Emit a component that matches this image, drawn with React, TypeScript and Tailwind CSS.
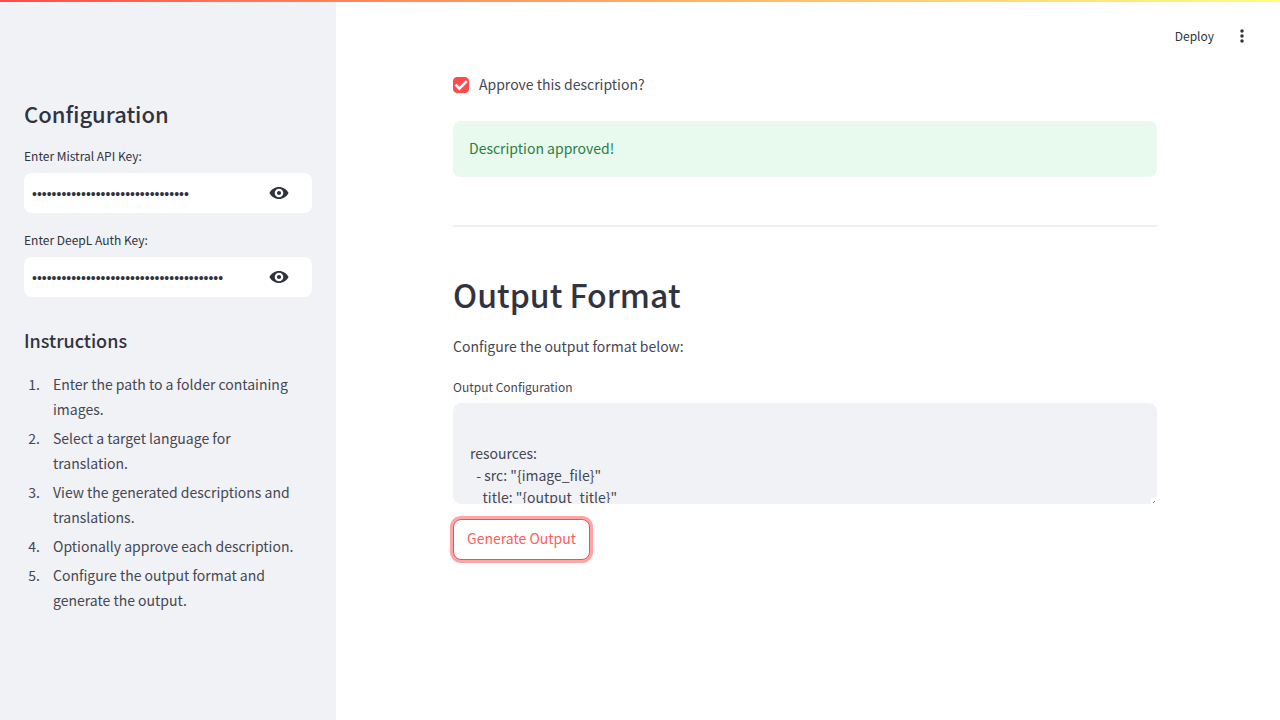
import { useState } from "react";

const OUTPUT_TEMPLATE = `
resources:
  - src: "{image_file}"
    title: "{output_title}"
    params:
      description: "{output_description}"
`;

const STEPS = [
  "Enter the path to a folder containing images.",
  "Select a target language for translation.",
  "View the generated descriptions and translations.",
  "Optionally approve each description.",
  "Configure the output format and generate the output.",
];

function EyeIcon() {
  return (
    <svg viewBox="0 0 20 20" className="h-5 w-5" fill="currentColor" fillRule="evenodd" aria-hidden="true">
      <path d="M10 4C5.800 4 2.300 6.400.4 10c1.900 3.600 5.400 6 9.600 6s7.700-2.400 9.600-6C17.700 6.400 14.200 4 10 4zm0 1.700a4.300 4.300 0 1 1 0 8.600 4.300 4.300 0 0 1 0-8.600zm0 2.200a2.100 2.100 0 1 0 0 4.200 2.100 2.100 0 0 0 0-4.200z" />
    </svg>
  );
}

function SecretField({ id, label, length }: { id: string; label: string; length: number }) {
  const [value, setValue] = useState("x".repeat(length));
  const [visible, setVisible] = useState(false);
  return (
    <div>
      <label htmlFor={id} className="block text-[12px] leading-5">
        {label}
      </label>
      <div className="mt-[7px] flex h-10 items-center rounded-lg bg-white">
        <input
          id={id}
          type={visible ? "text" : "password"}
          value={value}
          onChange={(e) => setValue(e.target.value)}
          className="h-full min-w-0 flex-1 bg-transparent pt-0.5 pl-2 font-['Liberation_Sans',sans-serif] text-[14px] outline-none"
        />
        <button
          type="button"
          aria-label="Show password text"
          onClick={() => setVisible(!visible)}
          className="mr-[13px] px-2.5"
        >
          <EyeIcon />
        </button>
      </div>
    </div>
  );
}

export default function App() {
  const [approved, setApproved] = useState(true);
  return (
    <div className="flex min-h-screen flex-col bg-white font-['Noto_Sans_CJK_SC',sans-serif] text-[14px] text-[#454753]">
      <div className="absolute inset-x-0 top-0 h-0.5 bg-linear-to-r from-[#ff4b4b] to-[#fffd80]" />
      <div className="flex flex-1">
        <aside className="w-[336px] shrink-0 bg-[#f0f2f6] px-6 pt-24">
          <h2 className="text-[22px] leading-[34px] font-medium text-[#31333f]">Configuration</h2>
          <div className="mt-4 flex flex-col gap-[17px] text-[#31333f]">
            <SecretField id="mistral-key" label="Enter Mistral API Key:" length={32} />
            <SecretField id="deepl-key" label="Enter DeepL Auth Key:" length={39} />
          </div>
          <h3 className="mt-[30px] text-[18px] leading-[26px] font-medium text-[#31333f]">Instructions</h3>
          <ol className="mt-[19px] flex list-outside list-decimal flex-col gap-1 pr-2 pl-[19px] leading-[25px]">
            {STEPS.map((step) => (
              <li key={step} className="pl-2.5">
                {step}
              </li>
            ))}
          </ol>
        </aside>

        <div className="flex min-w-0 flex-1 flex-col">
          <header className="flex h-[72px] shrink-0 items-center justify-end gap-[18px] pr-7 text-[#31333f]">
            <button type="button" className="text-[12px] leading-5">
              Deploy
            </button>
            <button type="button" aria-label="Main menu">
              <svg viewBox="0 0 20 20" className="h-5 w-5" fill="currentColor" aria-hidden="true">
                <circle cx="10" cy="5" r="1.750" />
                <circle cx="10" cy="10" r="1.750" />
                <circle cx="10" cy="15" r="1.750" />
              </svg>
            </button>
          </header>

          <main className="w-full pr-1.5">
            <div className="mx-auto flex max-w-[704px] flex-col items-stretch">
              <label className="flex items-center gap-2.5 self-start leading-[25px]">
                <span className="grid h-4 w-4 place-items-center">
                  <input
                    type="checkbox"
                    checked={approved}
                    onChange={(e) => setApproved(e.target.checked)}
                    className="col-start-1 row-start-1 h-4 w-4 appearance-none rounded border border-[#d5d6dc] checked:border-[#ff4b4b] checked:bg-[#ff4b4b]"
                  />
                  {approved && (
                    <svg viewBox="0 0 16 16" className="pointer-events-none col-start-1 row-start-1 h-4 w-4" fill="none" aria-hidden="true">
                      <path d="M2.400 7.600 6.400 11.600 13.800 4.200" stroke="white" strokeWidth="2.600" />
                    </svg>
                  )}
                </span>
                Approve this description?
              </label>

              <div role="alert" className="mt-6 rounded-lg bg-[#e8f9ee] px-4 pt-[15px] pb-[17px] leading-6 text-[#2b8045]">
                Description approved!
              </div>

              <hr className="mt-12 border-t-2 border-[#eeeff1]" />

              <h1 className="mt-[42px] text-[32px] leading-[50px] font-medium text-[#31333f]">Output Format</h1>
              <p className="mt-[15px] leading-[25px]">Configure the output format below:</p>

              <label htmlFor="output-config" className="mt-[18px] text-[12px] leading-5">
                Output Configuration
              </label>
              <div className="relative mt-1.5">
                <textarea
                  id="output-config"
                  defaultValue={OUTPUT_TEMPLATE}
                  className="block h-[101px] w-full resize-none rounded-lg border border-[#f0f2f6] bg-[#f0f2f6] p-4 leading-[22px] outline-none"
                />
                <svg viewBox="0 0 6 6" className="pointer-events-none absolute right-0 bottom-0 h-1.5 w-1.5" aria-hidden="true">
                  <path d="M0 0h6v6H0z" fill="#ffffff" />
                  <path d="M2 4h1v1H2zM3 3h1v1H3z" fill="#8a8c93" />
                </svg>
              </div>

              <button
                type="button"
                className="mt-[15px] h-[41px] self-start rounded-lg border border-[#ff4b4b] bg-white px-[13px] pb-0.5 text-[#ff5c5c] shadow-[0_0_0_3px_rgba(255,75,75,0.5)]"
              >
                Generate Output
              </button>
            </div>
          </main>
        </div>
      </div>
    </div>
  );
}
